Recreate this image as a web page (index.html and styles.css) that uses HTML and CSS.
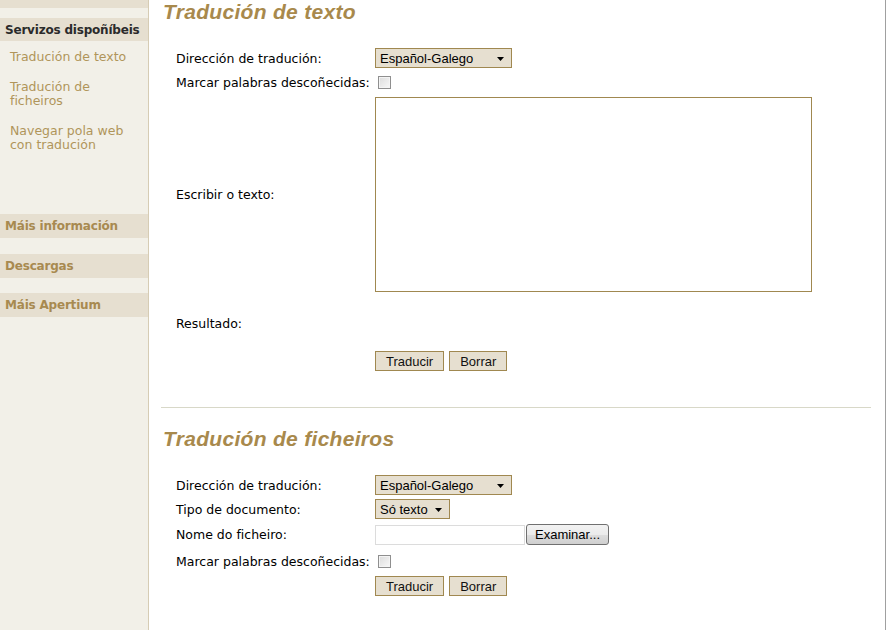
FILE: index.html
```html
<!DOCTYPE html>
<html lang="gl">
<head>
    <meta charset="UTF-8">
    <title>Apertium - Tradución</title>
    <link rel="stylesheet" href="styles.css">
</head>
<body>
<div class="page">
    <aside class="sidebar">
        <div class="top-band"></div>
        <h3 class="nav-title">Servizos dispoñíbeis</h3>
        <ul class="nav-links">
            <li><a href="#">Tradución de texto</a></li>
            <li><a href="#">Tradución de ficheiros</a></li>
            <li><a href="#">Navegar pola web con tradución</a></li>
        </ul>
        <h3 class="nav-section">Máis información</h3>
        <h3 class="nav-section">Descargas</h3>
        <h3 class="nav-section">Máis Apertium</h3>
    </aside>

    <main class="content">
        <h2>Tradución de texto</h2>
        <form class="form">
            <div class="row">
                <label>Dirección de tradución:</label>
                <span class="select wide">Español-Galego<svg class="arrow" width="7" height="4" viewBox="0 0 7 4"><path d="M0 0h7L3.5 4z" fill="#000"/></svg></span>
            </div>
            <div class="row">
                <label>Marcar palabras descoñecidas:</label>
                <span class="checkbox"></span>
            </div>
            <div class="row row-text">
                <label>Escribir o texto:</label>
                <textarea></textarea>
            </div>
            <div class="row row-result">
                <label>Resultado:</label>
            </div>
            <div class="row row-buttons">
                <label></label>
                <button type="button" class="btn">Traducir</button>
                <button type="button" class="btn">Borrar</button>
            </div>
        </form>

        <hr>

        <h2>Tradución de ficheiros</h2>
        <form class="form form-files">
            <div class="row">
                <label>Dirección de tradución:</label>
                <span class="select wide">Español-Galego<svg class="arrow" width="7" height="4" viewBox="0 0 7 4"><path d="M0 0h7L3.5 4z" fill="#000"/></svg></span>
            </div>
            <div class="row">
                <label>Tipo de documento:</label>
                <span class="select narrow">Só texto<svg class="arrow" width="7" height="4" viewBox="0 0 7 4"><path d="M0 0h7L3.5 4z" fill="#000"/></svg></span>
            </div>
            <div class="row row-file">
                <label>Nome do ficheiro:</label>
                <span class="file-field"></span>
                <button type="button" class="browse">Examinar...</button>
            </div>
            <div class="row row-check">
                <label>Marcar palabras descoñecidas:</label>
                <span class="checkbox"></span>
            </div>
            <div class="row row-buttons">
                <label></label>
                <button type="button" class="btn">Traducir</button>
                <button type="button" class="btn">Borrar</button>
            </div>
        </form>
    </main>
</div>
</body>
</html>
```

FILE: styles.css
```css
body {
    margin: 0;
    font-family: "DejaVu Sans", Verdana, sans-serif;
    font-size: 12.5px;
    color: #000;
    background: #fff;
}
.page {
    display: flex;
    min-height: 630px;
    border-right: 1px solid #a0a0a0;
}
.sidebar {
    width: 148px;
    flex-shrink: 0;
    background: #f2f0e8;
    border-right: 1px solid #d6ccb4;
}
.top-band {
    height: 8px;
    background: #e6dfd0;
    margin-bottom: 10px;
}
.nav-title,
.nav-section {
    margin: 0;
    padding: 0 5px;
    background: #e6dfd0;
    font-size: 12px;
    font-weight: bold;
    white-space: nowrap;
    letter-spacing: -0.2px;
}
.nav-title {
    height: 23px;
    line-height: 24px;
    color: #2b2b2b;
}
.nav-section {
    height: 24px;
    line-height: 24px;
    color: #a88a50;
    margin-bottom: 15.5px;
}
.nav-links {
    list-style: none;
    margin: 0;
    padding: 9px 8px 0 10px;
    height: 173px;
    box-sizing: border-box;
}
.nav-links li {
    line-height: 14px;
    margin-bottom: 16px;
}
.nav-links a {
    color: #b0955a;
    text-decoration: none;
}
.content {
    flex: 1;
    padding: 0 14px 0 12px;
}
h2 {
    margin: 0;
    padding-left: 2px;
    font-family: "Liberation Sans", Arial, sans-serif;
    font-size: 21px;
    letter-spacing: 0.3px;
    font-style: italic;
    font-weight: bold;
    color: #a8894c;
    line-height: 24px;
}
hr {
    border: 0;
    border-top: 1px solid #d8d8c8;
    margin: 36px 0 19px;
}
.form {
    padding: 24px 0 0 15px;
    display: flex;
    flex-direction: column;
    gap: 4px;
}
.form-files {
    padding-top: 24px;
}
.row {
    display: flex;
    align-items: center;
    min-height: 20px;
}
.row label {
    width: 199px;
    flex-shrink: 0;
}
.select {
    position: relative;
    display: inline-flex;
    align-items: center;
    height: 20px;
    box-sizing: border-box;
    padding: 0 0 0 4px;
    background: #e6dfd0;
    border: 1px solid #a08850;
    font-family: "Liberation Sans", Arial, sans-serif;
    font-size: 13px;
}
.select.wide { width: 137px; }
.select.narrow { width: 75px; }
.arrow {
    position: absolute;
    right: 7px;
    top: 8px;
}
.checkbox {
    width: 13px;
    height: 13px;
    box-sizing: border-box;
    margin: 2px 0 2px 3px;
    border: 1px solid #8f8f8f;
    background: linear-gradient(135deg, #dcdcdc, #f8f8f8);
    box-shadow: inset 0 0 0 1px #f4f4f4;
}
.row-text {
    margin-top: 1px;
}
textarea {
    width: 437px;
    height: 195px;
    box-sizing: border-box;
    border: 1px solid #a08850;
    resize: none;
    margin: 0;
}
.row-result {
    margin-top: 17px;
}
.row-buttons {
    margin-top: 14px;
    gap: 5px;
}
.row-buttons label {
    margin-right: -5px;
}
.form-files .row-file {
    margin-top: 1px;
}
.form-files .row-check {
    margin-top: 2px;
}
.form-files .row-buttons {
    margin-top: 1px;
}
.btn {
    height: 20px;
    padding: 0 10px;
    margin: 0;
    background: #e6dfd0;
    border: 1px solid #a08850;
    font-family: "Liberation Sans", Arial, sans-serif;
    font-size: 13px;
    color: #111;
}
.file-field {
    width: 150px;
    height: 20px;
    box-sizing: border-box;
    border: 1px solid #dcdcdc;
    background: #fff;
}
.browse {
    height: 21px;
    width: 83px;
    margin: 0 0 0 1px;
    padding: 0;
    border: 1px solid #707070;
    border-radius: 3px;
    background: linear-gradient(#f2f2f2, #ebebeb 50%, #dddddd 51%, #cfcfcf);
    font-family: "Liberation Sans", Arial, sans-serif;
    font-size: 13px;
    color: #000;
}
```
